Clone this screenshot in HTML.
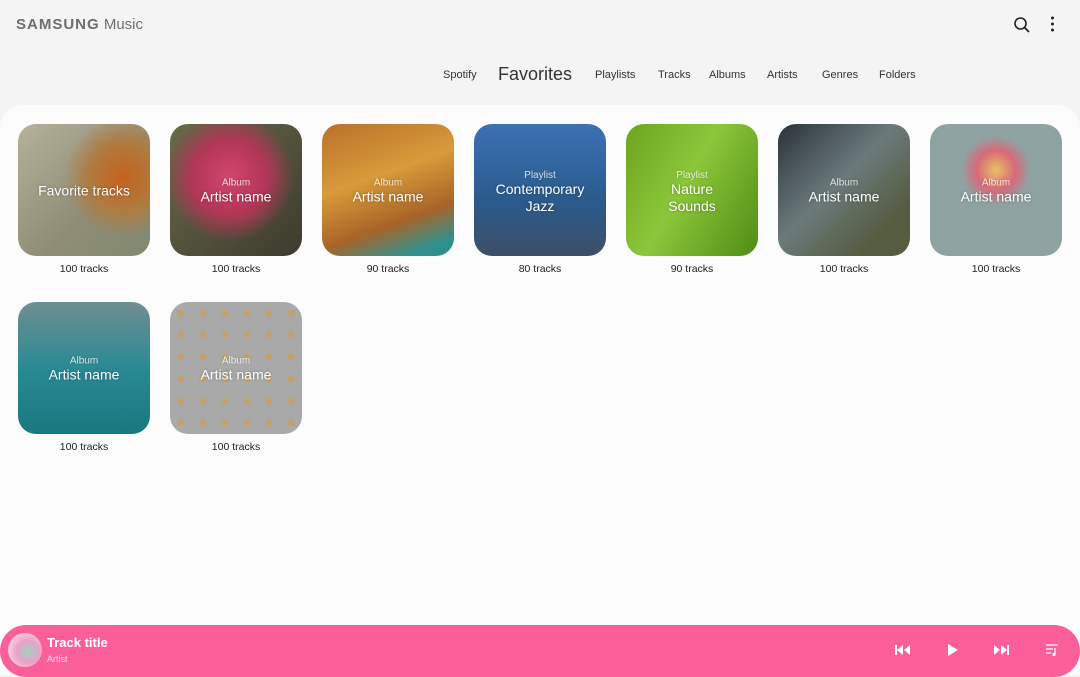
<!DOCTYPE html>
<html><head><meta charset="utf-8"><style>
*{margin:0;padding:0;box-sizing:border-box}
body{width:1080px;height:675px;background:#f4f4f4;font-family:"Liberation Sans",sans-serif;position:relative;overflow:hidden}
.logo{position:absolute;left:16px;top:16px;font-size:15px;color:#6e6e6e}
.logo b{letter-spacing:1px;font-weight:bold}
.tabs{position:absolute;top:69px;left:0;width:1080px;font-size:11px;color:#333}
.tabs span{position:absolute;top:0}
.main{position:absolute;left:0;top:105px;width:1080px;height:570px;background:#fcfcfc;border-radius:22px 22px 0 0}
.tile{position:absolute;width:132px;height:132px;border-radius:18px;overflow:hidden;color:#fff;text-align:center}
.tile .in{position:absolute;left:0;right:0;top:50%;transform:translateY(-45%);text-shadow:0 0 3px rgba(0,0,0,.3)}
.tile .s{font-size:10px;opacity:.8}
.tile .t{font-size:14px;line-height:17px}
.cap{position:absolute;width:132px;text-align:center;font-size:10.5px;color:#222}
.bar{position:absolute;left:0;top:625px;width:1080px;height:52px;background:#fb5f9a;border-radius:26px}
</style></head><body>
<div class="logo"><b>SAMSUNG</b> Music</div>
<svg style="position:absolute;left:1013px;top:16px" width="18" height="18" viewBox="0 0 18 18"><circle cx="7.5" cy="7.5" r="5.5" fill="none" stroke="#222" stroke-width="1.6"/><path d="M11.5 11.5L16 16" stroke="#222" stroke-width="1.8"/></svg>
<svg style="position:absolute;left:1050px;top:16px" width="5" height="16"><circle cx="2.5" cy="2" r="1.5" fill="#222"/><circle cx="2.5" cy="8" r="1.5" fill="#222"/><circle cx="2.5" cy="14" r="1.5" fill="#222"/></svg>
<div class="tabs">
<span style="left:443px">Spotify</span>
<span style="left:498px;top:-5px;font-size:18px">Favorites</span>
<span style="left:595px">Playlists</span>
<span style="left:658px">Tracks</span>
<span style="left:709px">Albums</span>
<span style="left:767px">Artists</span>
<span style="left:822px">Genres</span>
<span style="left:879px">Folders</span>
</div>
<div class="main"></div>

<div class="tile" style="left:18px;top:124px;background:radial-gradient(circle at 80% 40%,#c4621e 0,#b07a3e 25%,transparent 45%),linear-gradient(135deg,#b5b29a,#8f8c75 60%,#7f8a70)"><div class="in"><div class="t">Favorite tracks</div></div></div>
<div class="tile" style="left:170px;top:124px;background:radial-gradient(circle at 45% 40%,#d2466d 0,#b23656 35%,transparent 60%),linear-gradient(135deg,#6a6a4a,#3c3b2e)"><div class="in"><div class="s">Album</div><div class="t">Artist name</div></div></div>
<div class="tile" style="left:322px;top:124px;background:linear-gradient(160deg,#b9722a,#d89a3a 40%,#a86428 70%,#2f8f8c 90%)"><div class="in"><div class="s">Album</div><div class="t">Artist name</div></div></div>
<div class="tile" style="left:474px;top:124px;background:linear-gradient(180deg,#3b72b3,#2a5a8c 60%,#3d4e66)"><div class="in"><div class="s">Playlist</div><div class="t">Contemporary<br>Jazz</div></div></div>
<div class="tile" style="left:626px;top:124px;background:linear-gradient(120deg,#6aa51e,#8cc63a 45%,#4f8c14)"><div class="in"><div class="s">Playlist</div><div class="t">Nature<br>Sounds</div></div></div>
<div class="tile" style="left:778px;top:124px;background:linear-gradient(135deg,#2a3338,#6b7a7c 45%,#555c40 80%)"><div class="in"><div class="s">Album</div><div class="t">Artist name</div></div></div>
<div class="tile" style="left:930px;top:124px;background:radial-gradient(circle at 50% 35%,#e8c064 0,#d86a7a 18%,transparent 32%),#8fa2a2"><div class="in"><div class="s">Album</div><div class="t">Artist name</div></div></div>
<div class="tile" style="left:18px;top:302px;background:linear-gradient(180deg,#6f8e92,#2a8a94 50%,#18777f)"><div class="in"><div class="s">Album</div><div class="t">Artist name</div></div></div>
<div class="tile" style="left:170px;top:302px;background:radial-gradient(circle,#c8a060 2px,transparent 4px) 0 0/22px 22px,#a9a9a9"><div class="in"><div class="s">Album</div><div class="t">Artist name</div></div></div>

<div class="cap" style="left:18px;top:263px">100 tracks</div>
<div class="cap" style="left:170px;top:263px">100 tracks</div>
<div class="cap" style="left:322px;top:263px">90 tracks</div>
<div class="cap" style="left:474px;top:263px">80 tracks</div>
<div class="cap" style="left:626px;top:263px">90 tracks</div>
<div class="cap" style="left:778px;top:263px">100 tracks</div>
<div class="cap" style="left:930px;top:263px">100 tracks</div>
<div class="cap" style="left:18px;top:441px">100 tracks</div>
<div class="cap" style="left:170px;top:441px">100 tracks</div>

<div class="bar">
<div style="position:absolute;left:8px;top:8px;width:34px;height:34px;border-radius:50%;background:radial-gradient(circle at 60% 55%,#9fd3c0 0,#e8a0c8 40%,#f7c8dc 70%)"></div>
<div style="position:absolute;left:47px;top:10px;color:#fff;font-size:13px;font-weight:bold">Track title</div>
<div style="position:absolute;left:47px;top:29px;color:#fde;font-size:9px">Artist</div>
<svg style="position:absolute;left:895px;top:19px" width="16" height="12"><rect x="0" y="1" width="2" height="10" fill="#fff"/><path d="M8 1L2 6L8 11ZM15 1L9 6L15 11Z" fill="#fff"/></svg>
<svg style="position:absolute;left:947px;top:19px" width="12" height="12"><path d="M1 0L11 6L1 12Z" fill="#fff"/></svg>
<svg style="position:absolute;left:994px;top:19px" width="16" height="12"><path d="M0 1L6 6L0 11ZM7 1L13 6L7 11Z" fill="#fff"/><rect x="13" y="1" width="2" height="10" fill="#fff"/></svg>
<svg style="position:absolute;left:1045px;top:18px" width="14" height="14"><path d="M1 2H13M1 6H8M1 10H6" stroke="#fff" stroke-width="1.3"/><path d="M10 5V11" stroke="#fff" stroke-width="1.3"/><circle cx="9" cy="11.5" r="1.6" fill="#fff"/></svg>
</div>
</body></html>
